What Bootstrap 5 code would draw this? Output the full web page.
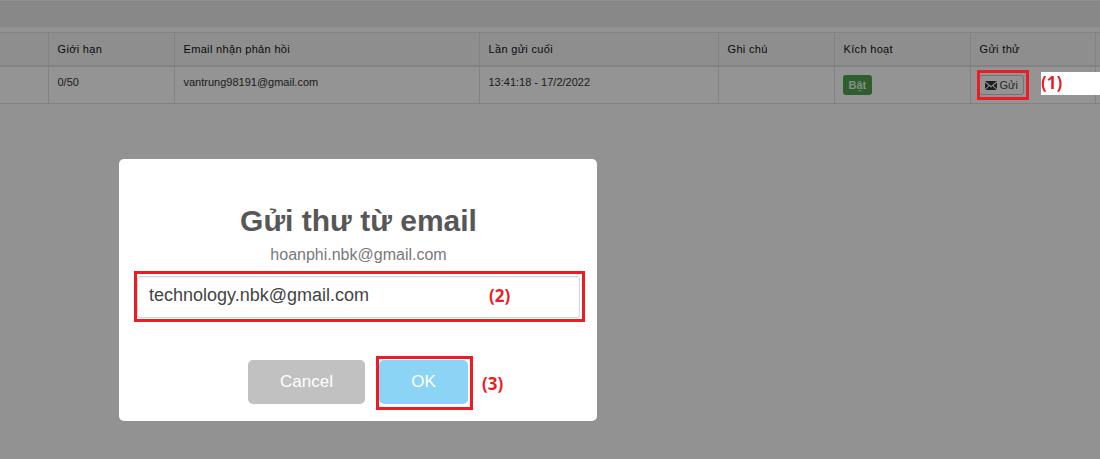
<!DOCTYPE html>
<html lang="vi">
<head>
    <meta charset="UTF-8">
    <meta name="viewport" content="width=device-width, initial-scale=1.0">
    <title>Gửi thư từ email</title>
    <link href="https://cdn.jsdelivr.net/npm/bootstrap@5.3.0/dist/css/bootstrap.min.css" rel="stylesheet">
    <style>
        html, body {
            height: 100%;
        }
        body {
            background-color: #f8f8f8;
            font-family: "Liberation Sans", Arial, sans-serif;
            overflow: hidden;
        }
        .top-strip {
            height: 26px;
            margin-top: 1px;
            margin-bottom: 5px;
            background-color: #e7e7e7;
        }
        .mail-table {
            table-layout: fixed;
            width: 1100px;
            margin: 0;
            font-size: 11px;
            color: #333;
            border-collapse: collapse;
        }
        .mail-table th, .mail-table td {
            border: 1px solid #ddd;
            padding: 8px 8px 8px 9px;
            line-height: 16px;
            vertical-align: top;
            background: transparent;
        }
        .mail-table thead th {
            height: 33px;
            font-weight: 400;
            color: #111;
            background-color: #f2f2f2;
            border-bottom: 2px solid #ddd;
            letter-spacing: .33px;
        }
        .mail-table tbody td {
            height: 37px;
            padding-top: 7px;
            background-color: #fbfbfb;
        }
        .mail-table th:first-child, .mail-table td:first-child {
            border-left: 0;
        }
        .mail-table th:last-child, .mail-table td:last-child {
            border-right: 0;
        }
        .on-tag {
            display: inline-block;
            padding: 0 6px;
            margin: 1px 0 0 -1px;
            height: 20px;
            line-height: 20px;
            font-weight: 700;
            font-size: 11px;
            color: #e4efe4;
            background-color: #4f9f4f;
            border-radius: 3px;
        }
        .send-btn {
            display: inline-flex;
            align-items: center;
            gap: 3px;
            height: 20px;
            padding: 0 5px;
            margin: 1px 0 0 -1px;
            font-size: 11px;
            color: #444;
            background: #fbfbfb;
            border: 1px solid #c4c4c4;
            border-radius: 3px;
        }
        .dim-layer {
            position: fixed;
            inset: 0;
            padding: 159px 0 0 119px;
            background-color: rgba(0, 0, 0, .41);
        }
        .send-dialog {
            width: 478px;
            height: 262px;
            padding: 44px 17px 0 18px;
            background: #fff;
            border-radius: 5px;
            text-align: center;
        }
        .send-dialog h2 {
            margin: 0;
            font-size: 30px;
            line-height: 36px;
            font-weight: 700;
            color: #575757;
        }
        .send-dialog p {
            margin: 5px 0 11px;
            font-size: 16px;
            line-height: 21px;
            color: #797979;
        }
        .send-dialog .form-control {
            height: 42px;
            padding: 0 11px 3px;
            font-size: 18px;
            color: #444;
            border: 1px solid #d7d7d7;
            border-radius: 3px;
            box-shadow: inset 0 1px 1px rgba(0, 0, 0, .06);
        }
        .dialog-actions {
            margin-top: 42px;
            padding-left: 111px;
            gap: 14px;
        }
        .dialog-actions .btn {
            height: 44px;
            padding: 0;
            font-size: 17px;
            color: #fff;
            border: 0;
            border-radius: 5px;
        }
        .btn-cancel {
            width: 117px;
            background-color: #c1c1c1;
        }
        .btn-ok {
            width: 89px;
            background-color: #8cd4f5;
        }
        .mark-box {
            position: fixed;
            border: 3px solid #ed1c24;
        }
        .mark-num {
            position: fixed;
            font-family: "Open Sans", sans-serif;
            font-size: 17px;
            line-height: 22px;
            font-weight: 700;
            color: #ed1c24;
        }
        #box1 { left: 977px; top: 70px; width: 52px; height: 30px; }
        #box2 { left: 134px; top: 271px; width: 451px; height: 51px; }
        #box3 { left: 376px; top: 356px; width: 97px; height: 54px; }
        #num1 { left: 1041px; top: 72px; width: 59px; height: 23px; background: #fff; }
        #num2 { left: 489px; top: 285px; }
        #num3 { left: 482px; top: 373px; }
    </style>
</head>
<body>

<div class="top-strip"></div>

<table class="table mail-table">
    <colgroup>
        <col style="width: 48px">
        <col style="width: 126px">
        <col style="width: 305px">
        <col style="width: 239px">
        <col style="width: 116px">
        <col style="width: 136px">
        <col style="width: 125px">
        <col style="width: 5px">
    </colgroup>
    <thead>
        <tr>
            <th></th>
            <th>Giới hạn</th>
            <th>Email nhận phản hồi</th>
            <th>Lần gửi cuối</th>
            <th>Ghi chú</th>
            <th>Kích hoạt</th>
            <th>Gửi thử</th>
            <th></th>
        </tr>
    </thead>
    <tbody>
        <tr>
            <td></td>
            <td>0/50</td>
            <td>vantrung98191@gmail.com</td>
            <td>13:41:18 - 17/2/2022</td>
            <td></td>
            <td><span class="on-tag">Bật</span></td>
            <td>
                <span class="send-btn">
                    <svg width="12" height="9" viewBox="0 0 12 9" aria-hidden="true"><path d="M0 0h12L6 5zM0 1.4V8l3.6-3.6zM12 1.4V8L8.4 4.4zM4.3 5 6 6.4 7.7 5 11.6 9H.4z" fill="#333"/></svg>
                    Gửi
                </span>
            </td>
            <td></td>
        </tr>
    </tbody>
</table>

<div class="dim-layer">
    <div class="send-dialog">
        <h2>Gửi thư từ email</h2>
        <p>hoanphi.nbk@gmail.com</p>
        <input type="text" class="form-control" value="technology.nbk@gmail.com">
        <div class="dialog-actions d-flex justify-content-start">
            <button type="button" class="btn btn-cancel">Cancel</button>
            <button type="button" class="btn btn-ok">OK</button>
        </div>
    </div>
</div>

<div class="mark-box" id="box1"></div>
<div class="mark-box" id="box2"></div>
<div class="mark-box" id="box3"></div>
<div class="mark-num" id="num1">(1)</div>
<div class="mark-num" id="num2">(2)</div>
<div class="mark-num" id="num3">(3)</div>

</body>
</html>
